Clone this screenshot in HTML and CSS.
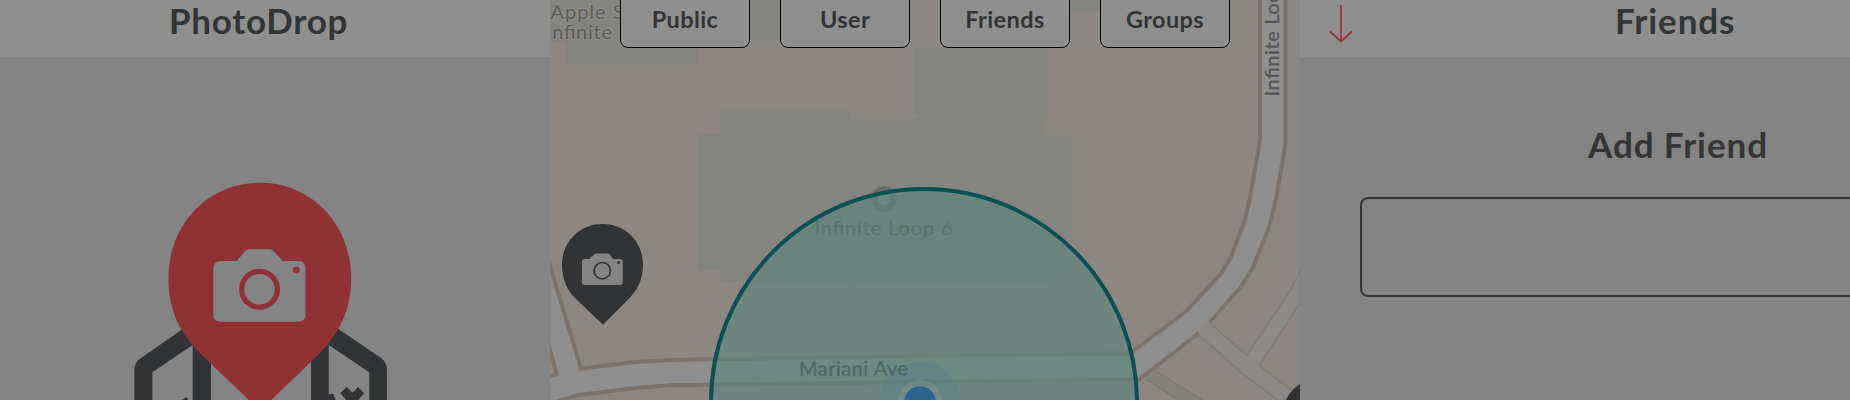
FILE: index.html
```html
<!DOCTYPE html>
<html lang="en">
<head>
<meta charset="utf-8">
<title>PhotoDrop</title>
<link rel="stylesheet" href="styles.css">
</head>
<body>
<main class="screens">
  <section class="screen home">
    <header class="bar"><h1 class="title title-home">PhotoDrop</h1></header>
    <svg class="logo" viewBox="0 57 550 343" width="550" height="343">
      <g class="dark">
        <path d="M134.3 410V370Q134.3 363 139.5 359L190 324L211 346V410H192.7V345L152.3 372.3V410Z"/>
        <path d="M387 410V370Q387 363 381.8 358.5L331 324L311 346V410H328.7V345L369.3 372.3V410Z"/>
        <path d="M346.7 387l5.6 5.7 5.7-5.7 6.3 6.3-7 7.7h-10.300l-6.700-7.700zM328 394.500l5.300-.8 3 8h-8zM179 401l8-4 1.500 4z"/>
      </g>
      <path class="red" d="M260 182.700C311 182.700 351.200 223 351.200 279C351.200 312 337 336 319 354L260 411L201 354C182 336 168.400 312 168.400 279C168.400 223 209 182.700 260 182.700Z"/>
      <path class="paper" d="M221 261H237L244 252Q246.500 249.300 249 249.300H270Q272.500 249.300 274.500 252L283 261H298Q305.500 261 305.500 268.500V314.500Q305.500 321.700 298 321.700H221Q213.300 321.700 213.300 314.500V268.500Q213.300 261 221 261Z"/>
      <circle class="lens-red" cx="259.500" cy="289.300" r="17.900"/>
      <circle class="red" cx="296.400" cy="270" r="3.500"/>
    </svg>
  </section>

  <section class="screen map">
    <svg class="map-art" viewBox="550 0 750 400" width="750" height="400">
      <g class="building">
        <path d="M550 0H698V64.700H566V42H550ZM750 0H782V41H750ZM1068 0H1102V12H1068Z"/>
        <path d="M914 47H1047.500V114.300H1044V135H1071.500V270H1048V281.500H720.700V270H698V134H720.700V110.700H848.700V119H918V114.300H914Z"/>
      </g>
      <path class="seam" d="M849.500 119V281"/>
      <g class="lane">
        <path d="M1199 335L1243 374L1278 400H1310V400L1291.700 390L1259 365.700L1300 303V270L1291.700 288.300L1246.700 355.300L1211.700 324.700Z"/>
      </g>
      <path class="trail" d="M1155 371L1205 402M1146 379L1183 402"/>
      <path class="trail-fill" d="M1155 371L1205 402H1183L1146 379Z"/>
      <path class="road" d="M548 259L581 368.700L633 362.300L671.700 360L713 359.300L950 355.500L1130 353.500L1186.700 311L1221.700 272.500L1230 259L1245 220L1250 197L1259 147L1260 137V-4H1285.500V143L1276 200L1268.700 228.300L1251.700 270L1240 288L1210 322L1197.700 334L1140 379L950 381.500L713 384.700L673 385L638 387.700L576.700 395.300L550 404L540 380L556.700 374L548 343Z"/>
      <path class="join" d="M1197 331L1207 320L1214 327L1203 339Z"/>
      <text class="label halo" x="550.500" y="18.500" textLength="73" lengthAdjust="spacing">Apple S</text>
      <text class="label halo" x="546" y="39" textLength="66">Infinite</text>
      <text class="label" transform="translate(1279 96.500) rotate(-90)" textLength="117">Infinite Loop</text>
      <circle class="poi" cx="884" cy="199" r="9.500"/>
      <text class="label" x="814.500" y="235" textLength="138">Infinite Loop 6</text>
      <circle class="radius" cx="924" cy="402" r="213"/>
      <circle class="pulse" cx="920" cy="402" r="40"/>
      <text class="label street" transform="translate(799 376) rotate(-.4)" textLength="109">Mariani Ave</text>
      <circle class="dot-ring" cx="920" cy="402" r="22"/>
      <circle class="dot" cx="920" cy="402" r="15.800"/>
      <g class="dark">
        <path d="M602.700 224C626 224 643 242 643 265C643 279 637.500 290 629.500 298L603 324.800L575.500 298.500C567.500 291 562 279 562 265C562 242 579.500 224 602.700 224Z"/>
        <circle cx="1322" cy="418" r="40.500"/>
      </g>
      <path class="paper" d="M585 259H589L594 254.500Q595.500 253.500 597 253.500H607Q608.500 253.500 610 254.500L613 259H619.500Q622.800 259 622.800 262V282Q622.800 285 619.500 285H585Q582 285 582 282V262Q582 259 585 259Z"/>
      <circle class="lens-dark" cx="602.300" cy="270.700" r="8.200"/>
      <circle class="dark" cx="618.700" cy="262.400" r="1.500"/>
    </svg>
    <nav class="filters">
      <button class="filter f-public">Public</button>
      <button class="filter f-user">User</button>
      <button class="filter f-friends">Friends</button>
      <button class="filter f-groups">Groups</button>
    </nav>
  </section>

  <section class="screen friends">
    <header class="bar bar-friends">
      <svg class="arrow" viewBox="0 0 24 40" width="24" height="40"><path d="M12 2V38M1 28.500L12 38.500L23 28.500"/></svg>
      <h1 class="title title-friends">Friends</h1>
    </header>
    <form class="add">
      <label class="title title-add" for="friend">Add Friend</label>
      <input class="field" id="friend" type="text">
    </form>
  </section>
</main>
</body>
</html>
```

FILE: styles.css
```css
* { box-sizing: border-box; }
body { margin: 0; overflow: hidden; font-family: Lato, "Open Sans", sans-serif; }
.screens { display: flex; width: 1850px; height: 400px; overflow: hidden; }
.screen { flex: none; height: 400px; overflow: hidden; background: #848484; }
.home { width: 550px; }
.map { width: 750px; display: grid; background: #8c8783; }
.friends { width: 550px; }

.bar { height: 57px; display: flex; background: #8f8f8f; }
.home .bar { padding-left: 169px; }
.bar-friends { width: 750px; padding-left: 29px; }
.title { margin: 0; font-size: 35px; line-height: 42px; font-weight: 700; color: #323435; white-space: nowrap; }
.bar .title { margin-top: -1px; }
.title-home { letter-spacing: .75px; }
.title-friends { margin-left: 262px; letter-spacing: .9px; }
.arrow { margin-top: 3px; fill: none; stroke: #99343a; stroke-width: 1.8; }

.logo, .map-art { display: block; }
.dark { fill: #323334; }
.red { fill: #8e3236; }
.paper { fill: #848484; }
.lens-red { fill: none; stroke: #8e3236; stroke-width: 5.2; }
.lens-dark { fill: none; stroke: #323334; stroke-width: 1.7; }

.map-art, .filters { grid-area: 1 / 1; }
.building { fill: #848480; }
.seam { stroke: #888681; }
.road { fill: #8f8f8f; stroke: #7b736b; stroke-width: 4; stroke-linejoin: round; }
.join, .lane { fill: #8b8a88; }
.lane path { stroke: #7d7b76; stroke-width: 1.2; }
.trail { stroke: #7b7667; stroke-width: 2; }
.trail-fill { fill: #82817a; }
.label { font-size: 20px; fill: #555; stroke: #555; stroke-width: .35; }
.halo { fill: #5b5b5b; stroke: #8f8d8b; stroke-width: 2; paint-order: stroke; }
.street { fill: #4f6866; stroke: #4f6866; }
.poi { fill: #8f8f8d; stroke: #6c6b67; stroke-width: 7; }
.radius { fill: rgba(92, 132, 123, .66); stroke: #0a5055; stroke-width: 4; }
.pulse { fill: rgba(88, 125, 135, .4); }
.dot-ring { fill: #718b86; }
.dot { fill: #2c668c; }

.filters { position: relative; display: flex; gap: 30px; padding-left: 70px; align-items: flex-start; }
.filter { width: 130px; height: 56px; margin-top: -8px; padding: 0 0 3px; border: 1px solid #050505; border-radius: 8px; background: #8f8f8f; color: #323435; font: 700 23.500px/28px Lato, "Open Sans", sans-serif; letter-spacing: .4px; }

.add { width: 750px; padding: 62px 60px 0; display: flex; flex-direction: column; }
.title-add { align-self: center; margin-left: 6px; letter-spacing: .9px; line-height: 50px; color: #353535; }
.field { width: 630px; height: 100px; margin-top: 28px; border: 2px solid #343635; border-radius: 8px; background: transparent; }
```
